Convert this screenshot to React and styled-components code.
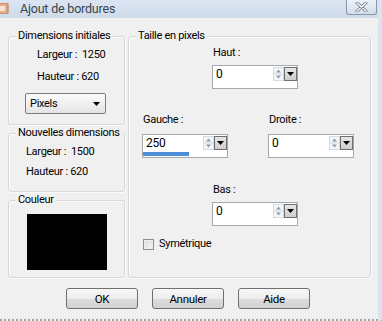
import React from 'react';
import styled, { createGlobalStyle } from 'styled-components';

const FONT = 'Roboto, "Liberation Sans", Arial, sans-serif';

const GlobalStyle = createGlobalStyle`
  html, body {
    margin: 0;
    padding: 0;
    background: #f0f0f0;
    overflow: hidden;
  }
  body {
    font-family: ${FONT};
    font-size: 11px;
    letter-spacing: -0.3px;
    color: #000;
  }
`;

const Window = styled.div`
  width: 382px;
  height: 321px;
  box-sizing: border-box;
  background: #f0f0f0;
  border-right: 4px solid #dae3ef;
  border-bottom: 2px dotted #a4a4a4;
  display: flex;
  flex-direction: column;
  overflow: hidden;
`;

const TitleBar = styled.div`
  height: 18px;
  flex: none;
  display: flex;
  align-items: flex-start;
  background: linear-gradient(#dbe5f2, #cfdbea);
`;

const AppIcon = styled.svg`
  margin-top: 3px;
  flex: none;
`;

const Title = styled.div`
  margin-left: 11px;
  margin-top: 1px;
  font-size: 12.5px;
  line-height: 16px;
  letter-spacing: -0.2px;
  color: #38444f;
`;

const CloseBtn = styled.div`
  margin-left: auto;
  margin-right: 1px;
  width: 31px;
  height: 15px;
  box-sizing: border-box;
  border: 1px solid #8796ab;
  border-top: none;
  border-radius: 0 0 3px 3px;
  background: linear-gradient(#edf2f8, #d3ddea);
  display: flex;
  align-items: center;
  justify-content: center;
`;

const Body = styled.div`
  display: flex;
  gap: 3px;
  padding: 18px 0 0 8px;
`;

const LeftColumn = styled.div`
  width: 117px;
  display: flex;
  flex-direction: column;
  gap: 8px;
`;

const Group = styled.div`
  position: relative;
  box-sizing: border-box;
  width: ${p => p.$w}px;
  height: ${p => p.$h}px;
  border: 1px solid #d6d9dc;
  border-radius: 3px;
  box-shadow: inset 1px 1px 0 #fbfbfb, 1px 1px 0 #fbfbfb;
  display: flex;
  flex-direction: column;
`;

const Legend = styled.span`
  position: absolute;
  top: -8px;
  left: 7px;
  padding: 0 2px;
  background: #f0f0f0;
  line-height: 14px;
  white-space: nowrap;
`;

const InfoLine = styled.div`
  line-height: 14px;
  margin-left: ${p => p.$x}px;
  margin-top: ${p => p.$y}px;
  white-space: nowrap;
`;

const Select = styled.div`
  margin: 9px 0 0 16px;
  width: 81px;
  height: 21px;
  box-sizing: border-box;
  border: 1px solid #7d7d7d;
  border-radius: 2px;
  background: linear-gradient(#fbfbfb, #e4e4e4);
  display: flex;
  align-items: center;
  padding: 0 5px 0 4px;
  line-height: 14px;
`;

const SelectText = styled.span`
  flex: 1;
`;

const ColorSwatch = styled.div`
  margin: 13px 0 0 18px;
  width: 80px;
  height: 56px;
  background: #000;
`;

const FieldRow = styled.div`
  display: flex;
  margin-left: ${p => p.$x}px;
  margin-top: ${p => p.$y}px;
  gap: ${p => p.$gap || 0}px;
`;

const FieldBlock = styled.div`
  display: flex;
  flex-direction: column;
`;

const FieldLabel = styled.div`
  line-height: 14px;
  margin-left: 1px;
  margin-bottom: ${p => p.$gap}px;
  white-space: nowrap;
`;

const Field = styled.div`
  width: 86px;
  height: 24px;
  box-sizing: border-box;
  border: 1px solid #a3a9b1;
  background: #fff;
  display: flex;
  flex-direction: column;
`;

const FieldMain = styled.div`
  display: flex;
  height: 14px;
  margin-top: 1px;
`;

const FieldValue = styled.span`
  flex: 1;
  padding-left: 3px;
  line-height: 15px;
  font-size: 12px;
`;

const DropBtn = styled.div`
  width: 13px;
  height: 14px;
  box-sizing: border-box;
  border: 1px solid #6f6f6f;
  background: linear-gradient(#e6e6e6, #cdcdcd);
  display: flex;
  align-items: center;
  justify-content: center;
`;

const Progress = styled.div`
  margin-top: 2px;
  height: 4px;
  width: 46px;
  background: #4a8fd7;
`;

const CheckRow = styled.label`
  display: flex;
  align-items: center;
  gap: 5px;
  margin: 11px 0 0 14px;
  line-height: 14px;
`;

const CheckBox = styled.span`
  width: 11px;
  height: 11px;
  box-sizing: border-box;
  border: 1px solid #8f8f8f;
  background: linear-gradient(135deg, #d9d9d9, #f7f7f7);
  box-shadow: inset 0 0 0 1px #ececec;
`;

const ButtonBar = styled.div`
  display: flex;
  gap: 14px;
  padding-left: 66px;
  margin-top: 10px;
`;

const Button = styled.button`
  width: 72px;
  height: 21px;
  box-sizing: border-box;
  border: 1px solid #707070;
  border-radius: 3px;
  background: linear-gradient(#f7f7f7 0%, #ececec 50%, #dcdcdc 51%, #d2d2d2 100%);
  font-family: ${FONT};
  font-size: 11.5px;
  letter-spacing: -0.3px;
  color: #000;
  padding: 0;
`;

const Spin = () => (
  <svg width="11" height="14" viewBox="0 0 11 14">
    <rect x="0.5" y="0.5" width="10" height="13" fill="#f4f6f8" stroke="#d4dae2" />
    <line x1="1" y1="7" x2="10" y2="7" stroke="#d4dae2" />
    <path d="M3 5.5 L8 5.5 L5.5 2.5 Z" fill="#8a9bb0" />
    <path d="M3 8.5 L8 8.5 L5.5 11.5 Z" fill="#8a9bb0" />
  </svg>
);

const Arrow = ({ w = 7 }) => (
  <svg width={w} height="4" viewBox="0 0 7 4">
    <path d="M0 0 L7 0 L3.5 4 Z" fill="#000" />
  </svg>
);

const SpinField = ({ value, progress }) => (
  <Field>
    <FieldMain>
      <FieldValue>{value}</FieldValue>
      <Spin />
      <DropBtn>
        <Arrow />
      </DropBtn>
    </FieldMain>
    {progress && <Progress />}
  </Field>
);

export default function App() {
  return (
    <>
      <GlobalStyle />
      <Window>
        <TitleBar>
          <AppIcon width="9" height="11" viewBox="0 0 9 11">
            <rect x="-3" y="0" width="11" height="11" rx="1" fill="#e9b08f" stroke="#b86e4e" />
            <rect x="-1" y="3" width="6" height="5" fill="#f7e4d8" />
          </AppIcon>
          <Title>Ajout de bordures</Title>
          <CloseBtn>
            <svg width="13" height="10" viewBox="0 0 13 10">
              <path d="M2 1 L11 9 M11 1 L2 9" stroke="#6c7a8e" strokeWidth="3" strokeLinecap="round" />
              <path d="M2 1 L11 9 M11 1 L2 9" stroke="#ffffff" strokeWidth="1.4" strokeLinecap="round" />
            </svg>
          </CloseBtn>
        </TitleBar>

        <Body>
          <LeftColumn>
            <Group $w={117} $h={89}>
              <Legend>Dimensions initiales</Legend>
              <InfoLine $x={28} $y={11}>Largeur : &nbsp;1250</InfoLine>
              <InfoLine $x={28} $y={8}>Hauteur : 620</InfoLine>
              <Select>
                <SelectText>Pixels</SelectText>
                <Arrow />
              </Select>
            </Group>
            <Group $w={117} $h={59}>
              <Legend>Nouvelles dimensions</Legend>
              <InfoLine $x={17} $y={11}>Largeur : &nbsp;1500</InfoLine>
              <InfoLine $x={17} $y={6}>Hauteur : 620</InfoLine>
            </Group>
            <Group $w={117} $h={78}>
              <Legend>Couleur</Legend>
              <ColorSwatch />
            </Group>
          </LeftColumn>

          <Group $w={243} $h={242}>
            <Legend>Taille en pixels</Legend>
            <FieldRow $x={83} $y={9}>
              <FieldBlock>
                <FieldLabel $gap={5}>Haut :</FieldLabel>
                <SpinField value="0" />
              </FieldBlock>
            </FieldRow>
            <FieldRow $x={13} $y={24} $gap={40}>
              <FieldBlock>
                <FieldLabel $gap={7}>Gauche :</FieldLabel>
                <SpinField value="250" progress />
              </FieldBlock>
              <FieldBlock>
                <FieldLabel $gap={7}>Droite :</FieldLabel>
                <SpinField value="0" />
              </FieldBlock>
            </FieldRow>
            <FieldRow $x={83} $y={25}>
              <FieldBlock>
                <FieldLabel $gap={5}>Bas :</FieldLabel>
                <SpinField value="0" />
              </FieldBlock>
            </FieldRow>
            <CheckRow>
              <CheckBox />
              Symétrique
            </CheckRow>
          </Group>
        </Body>

        <ButtonBar>
          <Button>OK</Button>
          <Button>Annuler</Button>
          <Button>Aide</Button>
        </ButtonBar>
      </Window>
    </>
  );
}
